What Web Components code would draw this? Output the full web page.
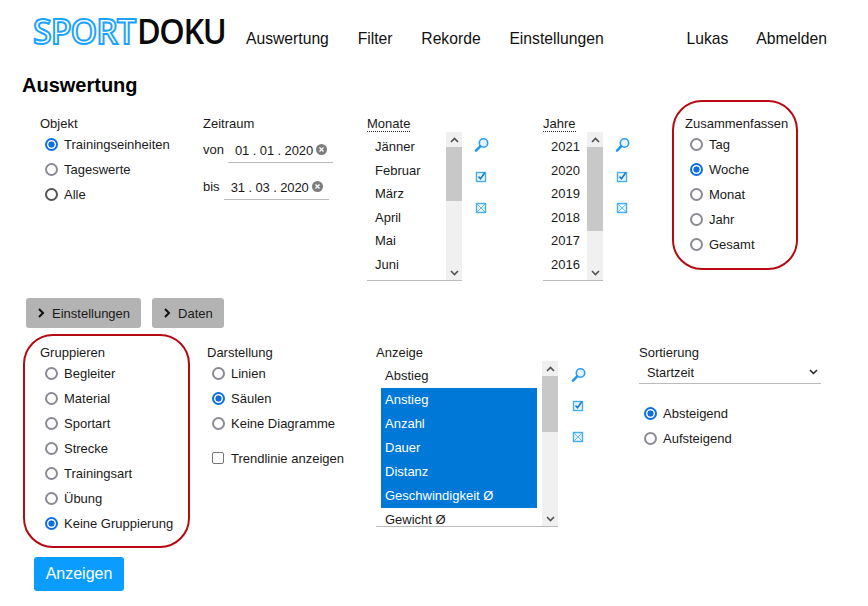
<!DOCTYPE html>
<html lang="de">
<head>
<meta charset="utf-8">
<title>Sportdoku</title>
<style>
  body { margin: 0; background: #fff; color: #1a1a1a; font-family: "Liberation Sans", Arial, sans-serif; font-size: 13px; }
</style>
</head>
<body>
<sd-page>
  <sd-header slot="header"></sd-header>
  <sd-field style="width:163px" label="Objekt" slot="row1">
    <sd-radios items="Trainingseinheiten|Tageswerte|Alle" checked="0" dark="2"></sd-radios>
  </sd-field>
  <sd-field style="width:164px" label="Zeitraum" slot="row1">
    <sd-date label="von" value="01 . 01 . 2020"></sd-date>
    <sd-date label="bis" value="31 . 03 . 2020"></sd-date>
  </sd-field>
  <sd-field style="width:176px" label="Monate" dotted slot="row1">
    <sd-listbox width="95" height="148" thumb="54" items="Jänner|Februar|März|April|Mai|Juni"></sd-listbox>
  </sd-field>
  <sd-field style="width:129px" label="Jahre" dotted slot="row1">
    <sd-listbox width="60" height="148" thumb="84" items="2021|2020|2019|2018|2017|2016"></sd-listbox>
  </sd-field>
  <sd-field boxed style="width:126px;height:170px;--pt:14px;--pl:11px" label="Zusammenfassen" slot="row1">
    <sd-radios items="Tag|Woche|Monat|Jahr|Gesamt" checked="1"></sd-radios>
  </sd-field>

  <sd-toggle slot="toggles">Einstellungen</sd-toggle>
  <sd-toggle slot="toggles">Daten</sd-toggle>

  <sd-field boxed style="width:167px;height:214px;--pt:9px;--pl:15px" label="Gruppieren" slot="row2">
    <sd-radios items="Begleiter|Material|Sportart|Strecke|Trainingsart|Übung|Keine Gruppierung" checked="6"></sd-radios>
  </sd-field>
  <sd-field style="width:169px;margin-left:17px;--pt:11px" label="Darstellung" slot="row2">
    <sd-radios items="Linien|Säulen|Keine Diagramme" checked="1"></sd-radios>
    <sd-check>Trendlinie anzeigen</sd-check>
  </sd-field>
  <sd-field style="width:263px;--pt:11px" label="Anzeige" slot="row2">
    <sd-listbox inset width="182" height="165" thumb="56" selected="1,2,3,4,5" items="Abstieg|Anstieg|Anzahl|Dauer|Distanz|Geschwindigkeit Ø|Gewicht Ø"></sd-listbox>
  </sd-field>
  <sd-field style="width:182px;--pt:11px" label="Sortierung" slot="row2">
    <sd-select value="Startzeit"></sd-select>
    <sd-radios items="Absteigend|Aufsteigend" checked="0"></sd-radios>
  </sd-field>

  <sd-submit slot="submit">Anzeigen</sd-submit>
</sd-page>

<script>
function makeTemplate(html) {
  const t = document.createElement('template');
  t.innerHTML = html;
  return t;
}

const pageTemplate = makeTemplate(`
  <style>
    :host { display: block; width: 868px; height: 606px; overflow: hidden; }
    h1 { margin: 0; padding: 0 0 0 22px; font-size: 20px; line-height: 24px; color: #000; height: 27px; }
    .row1 { display: flex; align-items: flex-start; padding-left: 40px; height: 198px; }
    .toggles { display: flex; gap: 11px; padding-left: 26px; height: 36px; }
    .row2 { display: flex; align-items: flex-start; padding-left: 23px; height: 223px; }
    .submit { padding-left: 34px; }
  </style>
  <slot name="header"></slot>
  <h1>Auswertung</h1>
  <div class="row1"><slot name="row1"></slot></div>
  <div class="toggles"><slot name="toggles"></slot></div>
  <div class="row2"><slot name="row2"></slot></div>
  <div class="submit"><slot name="submit"></slot></div>
`);

class SdPage extends HTMLElement {
  constructor() {
    super();
    this.attachShadow({ mode: 'open' }).appendChild(pageTemplate.content.cloneNode(true));
  }
}

const headerTemplate = makeTemplate(`
  <style>
    :host { display: flex; align-items: flex-start; height: 73px; padding-left: 33px; color: #111; }
    .logo { display: flex; font-family: "Open Sans", sans-serif; font-weight: 600; font-size: 35px; line-height: 40px; margin-top: 11px; width: 213px; white-space: nowrap; }
    .logo span { display: block; transform-origin: left center; }
    .sport { width: 104px; color: #fff; -webkit-text-stroke: 2px #1ba3ff; letter-spacing: -1px; transform: scaleX(.97); }
    .doku { color: #0a0a0a; letter-spacing: -1.5px; transform: scaleX(.925); }
    nav { display: flex; font-size: 15.7px; line-height: 20px; margin-top: 29px; width: 581px; }
    a { color: inherit; text-decoration: none; white-space: nowrap; }
    .main { display: flex; gap: 28.8px; flex: 1; }
    .user { display: flex; gap: 28px; }
  </style>
  <div class="logo"><span class="sport">SPORT</span><span class="doku">DOKU</span></div>
  <nav>
    <div class="main"><a href="#">Auswertung</a><a href="#">Filter</a><a href="#">Rekorde</a><a href="#">Einstellungen</a></div>
    <div class="user"><a href="#">Lukas</a><a href="#">Abmelden</a></div>
  </nav>
`);

class SdHeader extends HTMLElement {
  constructor() {
    super();
    this.attachShadow({ mode: 'open' }).appendChild(headerTemplate.content.cloneNode(true));
  }
}

const fieldTemplate = makeTemplate(`
  <style>
    :host { display: block; box-sizing: border-box; flex: none; padding-top: var(--pt, 16px); }
    :host([boxed]) { border: 2px solid #b50a12; border-radius: 30px; padding-left: var(--pl, 11px); }
    .head { display: flex; margin-bottom: 1px; }
    .label { line-height: 15px; white-space: nowrap; }
    :host([dotted]) .head { margin-bottom: 0; }
    :host([dotted]) .label { border-bottom: 1px dotted #222; }
  </style>
  <div class="head"><span class="label"></span></div>
  <slot></slot>
`);

class SdField extends HTMLElement {
  constructor() {
    super();
    this.attachShadow({ mode: 'open' }).appendChild(fieldTemplate.content.cloneNode(true));
    this.shadowRoot.querySelector('.label').textContent = this.getAttribute('label');
  }
}

const radiosStyle = `
  :host { display: block; padding: 0 0 0 5px; }
  .row { display: flex; align-items: center; gap: 6px; height: 25px; white-space: nowrap; }
  .dot { box-sizing: border-box; width: 13px; height: 13px; border-radius: 50%; border: 2px solid #8a8a94; background: #fff; flex: none; }
  .dark .dot { border-color: #555; }
  .on .dot { border-color: #0f6fe0; background: radial-gradient(circle, #0f6fe0 0 2.8px, #fff 3.4px); }
`;

class SdRadios extends HTMLElement {
  constructor() {
    super();
    const root = this.attachShadow({ mode: 'open' });
    const checked = Number(this.getAttribute('checked'));
    const dark = this.getAttribute('dark');
    const rows = this.getAttribute('items').split('|').map((item, i) => {
      const cls = i === checked ? 'row on' : String(i) === dark ? 'row dark' : 'row';
      return `<div class="${cls}"><span class="dot"></span><span>${item}</span></div>`;
    }).join('');
    root.innerHTML = `<style>${radiosStyle}</style>${rows}`;
  }
}

const dateTemplate = makeTemplate(`
  <style>
    :host { display: flex; align-items: flex-start; box-sizing: border-box; height: 37px; padding-top: 4px; white-space: nowrap; }
    .box { display: flex; align-items: center; box-sizing: border-box; height: 27px; padding: 3px 0 0 7px; border-bottom: 1px solid #bbb; margin-left: 4px; width: 105px; }
    .label { line-height: 26px; padding-top: 1px; }
    .val { flex: 1; letter-spacing: -0.1px; }
    svg { width: 11px; height: 11px; margin: 0 6px 2px 0; flex: none; }
  </style>
  <span class="label"></span>
  <div class="box">
    <span class="val"></span>
    <svg viewBox="0 0 11 11"><circle cx="5.5" cy="5.5" r="5.5" fill="#7d7d7d"/><path d="M3.5 3.5l4 4M7.5 3.5l-4 4" stroke="#fff" stroke-width="1.4"/></svg>
  </div>
`);

class SdDate extends HTMLElement {
  constructor() {
    super();
    const root = this.attachShadow({ mode: 'open' });
    root.appendChild(dateTemplate.content.cloneNode(true));
    root.querySelector('.label').textContent = this.getAttribute('label');
    root.querySelector('.val').textContent = this.getAttribute('value');
  }
}

const listboxStyle = `
  :host { display: flex; align-items: flex-start; }
  .list { display: flex; overflow: hidden; border-bottom: 1px solid #bbb; flex: none; }
  .items { flex: 1; overflow: hidden; min-width: 0; padding-top: 3px; }
  .item { height: 23.6px; line-height: 23.6px; padding-left: 8px; white-space: nowrap; }
  .inset .items { padding: 3px 5px 0; }
  .inset .item { height: 24px; line-height: 24px; padding-left: 4px; }
  .item.sel { background: #0078d7; color: #fff; }
  .bar { width: 16px; flex: none; display: flex; flex-direction: column; background: #f0f0f0; }
  .arrow { height: 15px; display: flex; align-items: center; justify-content: center; flex: none; }
  .arrow svg { width: 9px; height: 6px; }
  .thumb { background: #c8c8c8; flex: none; }
  .gap { flex: 1; }
  .tools { display: flex; flex-direction: column; gap: 15.5px; padding: 5px 0 0 12px; }
  :host([inset]) .tools { gap: 15px; padding: 6px 0 0 13px; }
  .tools svg { display: block; width: 15px; height: 16px; }
`;

const toolIcons = `
  <svg viewBox="0 0 15 16"><circle cx="9.5" cy="6" r="4.2" fill="#e6f4ff" stroke="#2a9df4" stroke-width="1.6"/><path d="M6.2 9.4L2 13.6" stroke="#1f97f2" stroke-width="2.6" stroke-linecap="round"/></svg>
  <svg viewBox="0 0 15 16"><rect x="2.5" y="3.5" width="9" height="9" fill="#eaf6ff" stroke="#45aef5" stroke-width="1.4"/><path d="M4.5 7.5l2 2.3 4.2-6" fill="none" stroke="#1578cc" stroke-width="1.5"/></svg>
  <svg viewBox="0 0 15 16"><rect x="2.5" y="3.5" width="9" height="9" fill="#eaf6ff" stroke="#45aef5" stroke-width="1.4"/><path d="M3 4l8 8M11 4l-8 8" stroke="#6abbf5"/></svg>
`;

class SdListbox extends HTMLElement {
  constructor() {
    super();
    const root = this.attachShadow({ mode: 'open' });
    const width = this.getAttribute('width');
    const height = Number(this.getAttribute('height'));
    const thumb = this.getAttribute('thumb');
    const selected = (this.getAttribute('selected') || '').split(',');
    const inset = this.hasAttribute('inset');
    const rows = this.getAttribute('items').split('|').map((item, i) => {
      const sel = selected.includes(String(i));
      return `<div class="item${sel ? ' sel' : ''}">${item}</div>`;
    }).join('');
    root.innerHTML = `
      <style>${listboxStyle}</style>
      <div class="list${inset ? ' inset' : ''}" style="width:${width}px;height:${height}px">
        <div class="items">${rows}</div>
        <div class="bar">
          <div class="arrow"><svg viewBox="0 0 9 6"><path d="M1 5l3.5-3.5L8 5" fill="none" stroke="#505050" stroke-width="1.6"/></svg></div>
          <div class="thumb" style="height:${thumb}px"></div>
          <div class="gap"></div>
          <div class="arrow"><svg viewBox="0 0 9 6"><path d="M1 1l3.5 3.5L8 1" fill="none" stroke="#505050" stroke-width="1.6"/></svg></div>
        </div>
      </div>
      <div class="tools">${toolIcons}</div>
    `;
  }
}

const toggleTemplate = makeTemplate(`
  <style>
    :host { display: flex; align-items: center; height: 30px; padding: 0 11px; gap: 7px; background: #b3b3b3; border-radius: 3px; color: #1a1a1a; }
    svg { width: 8px; height: 10px; flex: none; }
  </style>
  <svg viewBox="0 0 8 10"><path d="M2 1l4 4-4 4" fill="none" stroke="#111" stroke-width="2"/></svg>
  <slot></slot>
`);

class SdToggle extends HTMLElement {
  constructor() {
    super();
    this.attachShadow({ mode: 'open' }).appendChild(toggleTemplate.content.cloneNode(true));
  }
}

const checkTemplate = makeTemplate(`
  <style>
    :host { display: flex; align-items: center; gap: 7px; height: 20px; padding: 12px 0 0 5px; white-space: nowrap; }
    .box { box-sizing: border-box; width: 12px; height: 12px; border: 1.5px solid #777; border-radius: 2px; background: #fff; flex: none; }
  </style>
  <span class="box"></span><slot></slot>
`);

class SdCheck extends HTMLElement {
  constructor() {
    super();
    this.attachShadow({ mode: 'open' }).appendChild(checkTemplate.content.cloneNode(true));
  }
}

const selectTemplate = makeTemplate(`
  <style>
    :host { display: flex; align-items: center; justify-content: space-between; height: 22px; padding: 0 3px 0 8px; border-bottom: 1px solid #bbb; margin-bottom: 17px; font-size: 12.8px; }
    svg { width: 9px; height: 6px; }
  </style>
  <span class="val"></span>
  <svg viewBox="0 0 9 6"><path d="M1 1l3.5 3.5L8 1" fill="none" stroke="#222" stroke-width="1.5"/></svg>
`);

class SdSelect extends HTMLElement {
  constructor() {
    super();
    const root = this.attachShadow({ mode: 'open' });
    root.appendChild(selectTemplate.content.cloneNode(true));
    root.querySelector('.val').textContent = this.getAttribute('value');
  }
}

const submitTemplate = makeTemplate(`
  <style>
    :host { display: inline-flex; align-items: center; justify-content: center; width: 90px; height: 34px; background: #0a9dff; color: #fff; border-radius: 3px; font-size: 16px; }
  </style>
  <slot></slot>
`);

class SdSubmit extends HTMLElement {
  constructor() {
    super();
    this.attachShadow({ mode: 'open' }).appendChild(submitTemplate.content.cloneNode(true));
  }
}

customElements.define('sd-page', SdPage);
customElements.define('sd-header', SdHeader);
customElements.define('sd-field', SdField);
customElements.define('sd-radios', SdRadios);
customElements.define('sd-date', SdDate);
customElements.define('sd-listbox', SdListbox);
customElements.define('sd-toggle', SdToggle);
customElements.define('sd-check', SdCheck);
customElements.define('sd-select', SdSelect);
customElements.define('sd-submit', SdSubmit);
</script>
</body>
</html>
